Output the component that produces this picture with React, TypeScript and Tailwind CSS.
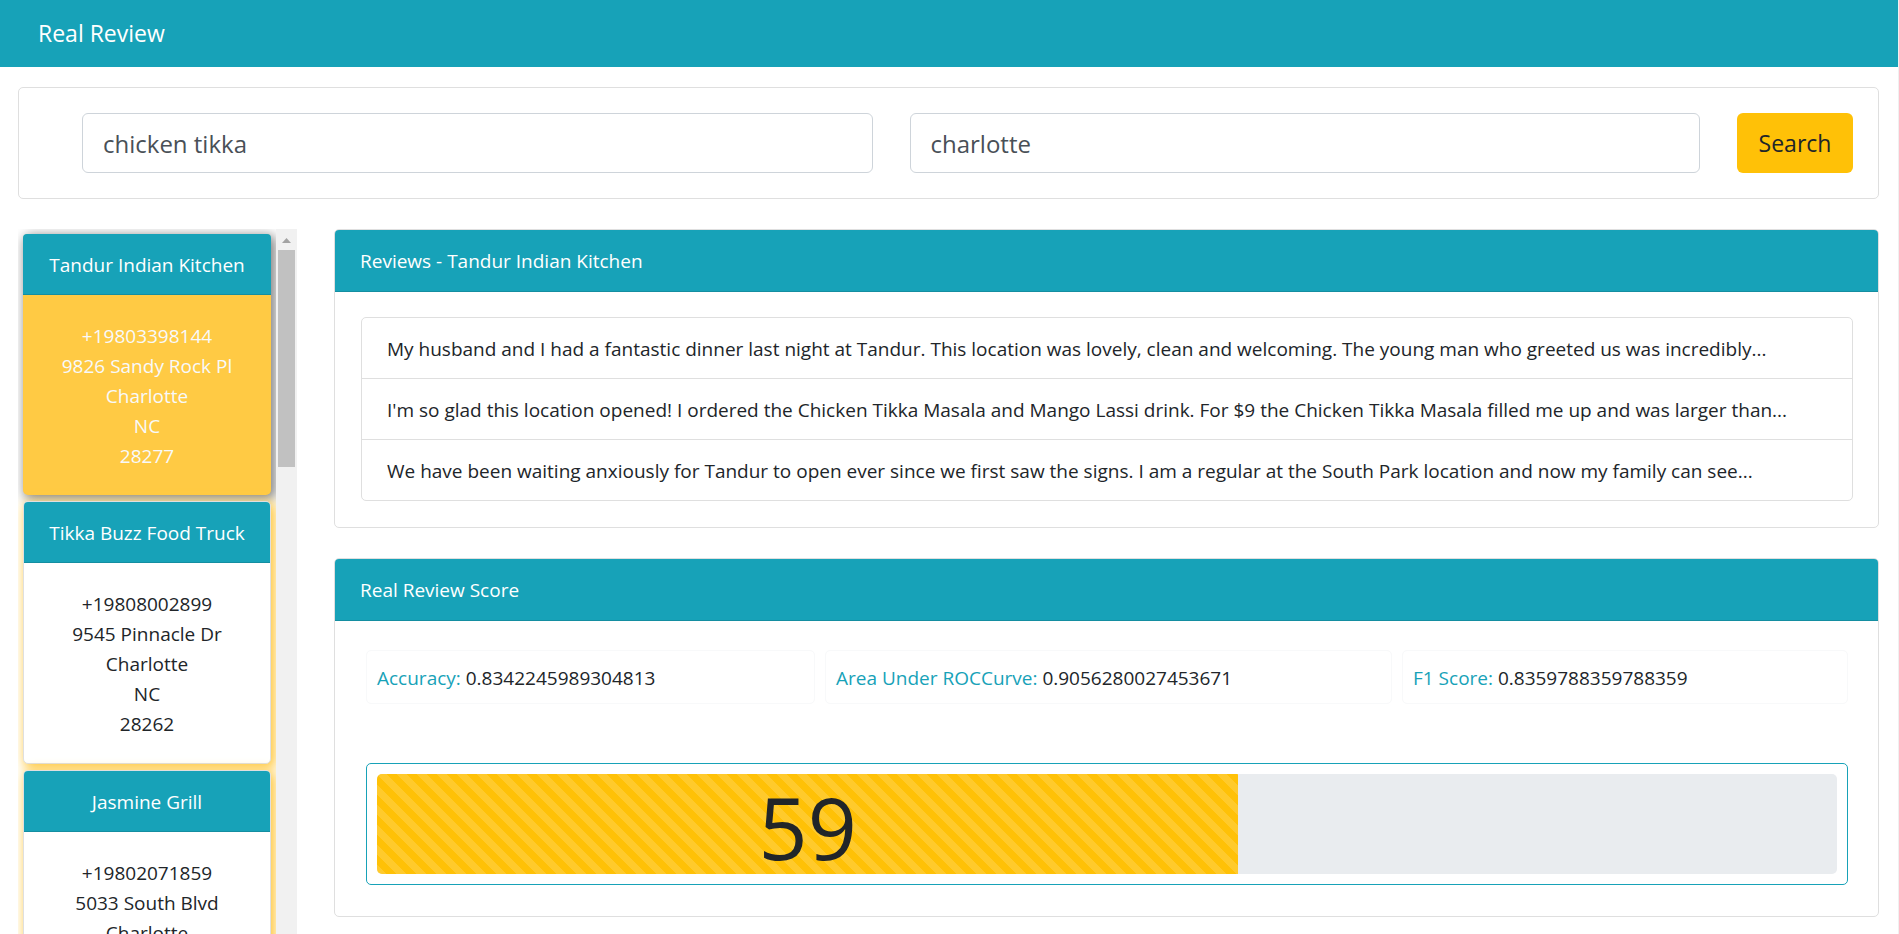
import { useState } from "react";

type Restaurant = {
  name: string;
  phone: string;
  street: string;
  city: string;
  state: string;
  zip: string;
};

const restaurants: Restaurant[] = [
  { name: "Tandur Indian Kitchen", phone: "+19803398144", street: "9826 Sandy Rock Pl", city: "Charlotte", state: "NC", zip: "28277" },
  { name: "Tikka Buzz Food Truck", phone: "+19808002899", street: "9545 Pinnacle Dr", city: "Charlotte", state: "NC", zip: "28262" },
  { name: "Jasmine Grill", phone: "+19802071859", street: "5033 South Blvd", city: "Charlotte", state: "NC", zip: "28217" },
];

const reviews = [
  "My husband and I had a fantastic dinner last night at Tandur. This location was lovely, clean and welcoming. The young man who greeted us was incredibly...",
  "I'm so glad this location opened! I ordered the Chicken Tikka Masala and Mango Lassi drink. For $9 the Chicken Tikka Masala filled me up and was larger than...",
  "We have been waiting anxiously for Tandur to open ever since we first saw the signs. I am a regular at the South Park location and now my family can see...",
];

const metrics = [
  { label: "Accuracy:", value: "0.8342245989304813" },
  { label: "Area Under ROCCurve:", value: "0.9056280027453671" },
  { label: "F1 Score:", value: "0.8359788359788359" },
];

const score = 59;

function CardHeader({ children }: { children: React.ReactNode }) {
  return (
    <h2 className="rounded-t-[4px] border-b border-[#148ea1] bg-[#17a2b8] px-[25px] pt-[16px] pb-[14px] leading-[31px] text-white">
      {children}
    </h2>
  );
}

function RestaurantCard({ item, active, onSelect }: { item: Restaurant; active: boolean; onSelect: () => void }) {
  const frame = active
    ? "bg-[#ffca44] text-[#f8f9fa] shadow-[3px_3px_12px_2px_#888888]"
    : "border border-[#dfdfdf] bg-white text-[#212529] shadow-[3px_3px_12px_2px_#ffca44]";
  return (
    <button type="button" onClick={onSelect} className={`block w-full shrink-0 rounded-[5px] text-center ${frame}`}>
      <span className="block rounded-t-[4px] border-b border-[#148ea1] bg-[#17a2b8] pt-[16px] pb-[14px] leading-[30px] whitespace-nowrap text-white">
        {item.name}
      </span>
      <span className="block pt-[26px] pb-[24px] leading-[30px]">
        <span className="block">{item.phone}</span>
        <span className="block">{item.street}</span>
        <span className="block">{item.city}</span>
        <span className="block">{item.state}</span>
        <span className="block">{item.zip}</span>
      </span>
    </button>
  );
}

export default function App() {
  const [selected, setSelected] = useState(0);
  const [term, setTerm] = useState("chicken tikka");
  const [place, setPlace] = useState("charlotte");

  return (
    <div className="flex h-screen flex-col overflow-hidden border-r border-[#f0f0f0] bg-white font-['Open_Sans','Noto_Sans',sans-serif] text-[19px] leading-[30px] text-[#212529]">
      <header className="shrink-0 bg-[#17a2b8] px-[38px] py-[15px]">
        <h1 className="text-[23px] leading-[37px] text-white">Real Review</h1>
      </header>

      <form
        onSubmit={(e) => e.preventDefault()}
        className="mr-[19px] ml-[18px] mt-5 flex shrink-0 gap-[37px] rounded-[5px] border border-[#dfdfdf] py-[25px] pr-[25px] pl-[63px]"
      >
        <input
          aria-label="Food"
          value={term}
          onChange={(e) => setTerm(e.target.value)}
          className="h-[60px] min-w-0 flex-1 rounded-[6px] border border-[#ced4da] px-5 text-[24px] text-[#495057]"
        />
        <input
          aria-label="Location"
          value={place}
          onChange={(e) => setPlace(e.target.value)}
          className="h-[60px] min-w-0 flex-1 rounded-[6px] border border-[#ced4da] px-5 text-[24px] text-[#495057]"
        />
        <button type="submit" className="h-[60px] w-[116px] rounded-[6px] bg-[#ffc107] text-[23px] text-[#212529]">
          Search
        </button>
      </form>

      <div className="mt-[30px] mr-[19px] ml-[18px] flex min-h-0 flex-1 gap-[37px]">
        <aside className="flex w-[279px] shrink-0 overflow-hidden">
          <div className="flex min-w-0 flex-1 flex-col gap-[6px] overflow-hidden p-[5px]">
            {restaurants.map((item, i) => (
              <RestaurantCard key={item.name} item={item} active={i === selected} onSelect={() => setSelected(i)} />
            ))}
          </div>
          <div className="flex w-[21px] shrink-0 flex-col bg-[#f1f1f1]" aria-hidden="true">
            <div className="flex h-[21px] items-center justify-center pt-[2px]">
              <svg width="9" height="5" viewBox="0 0 9 5">
                <path d="M4.5 0L9 5H0Z" fill="#a3a3a3" />
              </svg>
            </div>
            <div className="mx-[2px] h-[217px] bg-[#c1c1c1]" />
          </div>
        </aside>

        <main className="flex min-w-0 flex-1 flex-col gap-[30px]">
          <section className="rounded-[5px] border border-[#dfdfdf]">
            <CardHeader>Reviews - {restaurants[selected].name}</CardHeader>
            <div className="pt-[25px] pr-[25px] pb-[26px] pl-[26px]">
              <ul className="divide-y divide-[#dfdfdf] rounded-[5px] border border-[#dfdfdf]">
                {reviews.map((text) => (
                  <li key={text} className="truncate px-[25px] pt-[16px] pb-[14px]">
                    {text}
                  </li>
                ))}
              </ul>
            </div>
          </section>

          <section className="rounded-[5px] border border-[#dfdfdf]">
            <CardHeader>Real Review Score</CardHeader>
            <div className="pt-[29px] pr-[30px] pb-[31px] pl-[31px]">
              <div className="grid grid-cols-[449fr_567fr_446fr] gap-[10px]">
                {metrics.map((m) => (
                  <p key={m.label} className="rounded-[5px] border border-[#f8f9fa] px-[10px] pt-[11px] pb-[9px] leading-[32px] whitespace-nowrap">
                    <span className="text-[#17a2b8]">{m.label}</span> {m.value}
                  </p>
                ))}
              </div>
              <div className="mt-[59px] rounded-[5px] border border-[#17a2b8] p-[10px]">
                <div
                  role="progressbar"
                  aria-label="Real Review Score"
                  aria-valuenow={score}
                  aria-valuemin={0}
                  aria-valuemax={100}
                  className="h-[100px] overflow-hidden rounded-[5px] bg-[#e9ecef]"
                >
                  <div
                    style={{ width: `${score}%` }}
                    className="flex h-full items-center justify-center bg-[#ffc107] bg-[linear-gradient(45deg,rgba(255,255,255,0.15)_25%,transparent_25%,transparent_50%,rgba(255,255,255,0.15)_50%,rgba(255,255,255,0.15)_75%,transparent_75%,transparent)] bg-[length:20px_20px] pt-[5px] text-[86px] leading-[100px]"
                  >
                    {score}
                  </div>
                </div>
              </div>
            </div>
          </section>
        </main>
      </div>
    </div>
  );
}
